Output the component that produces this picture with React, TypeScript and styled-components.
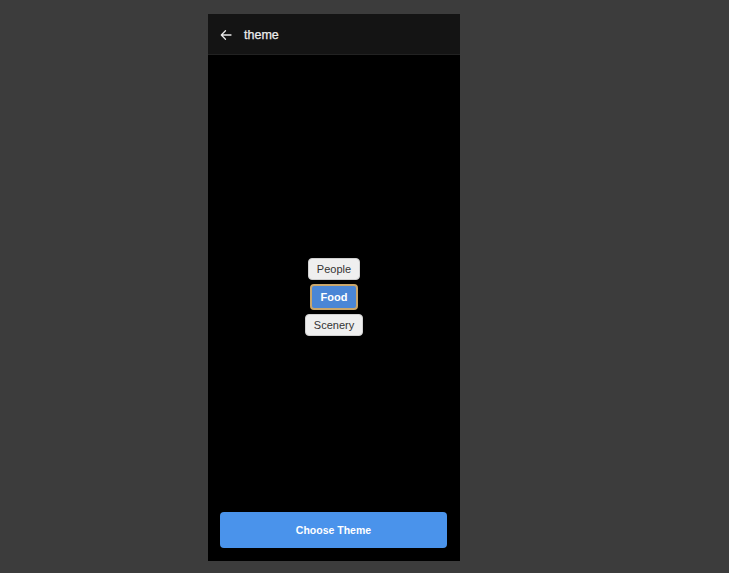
import React, { useState } from 'react';
import styled, { createGlobalStyle } from 'styled-components';

const GlobalStyle = createGlobalStyle`
  html, body {
    margin: 0;
    padding: 0;
    background: #3c3c3c;
    font-family: "Liberation Sans", Arial, sans-serif;
  }
`;

const Page = styled.div`
  display: flex;
  padding: 14px 0 0 208px;
  height: 573px;
  box-sizing: border-box;
`;

const Phone = styled.div`
  width: 252px;
  height: 547px;
  background: #000;
  display: flex;
  flex-direction: column;
`;

const Header = styled.header`
  height: 41px;
  flex-shrink: 0;
  background: #141414;
  border-bottom: 1px solid #222;
  display: flex;
  align-items: center;
  padding: 1px 0 0 11px;
  box-sizing: border-box;
  gap: 11px;
`;

const BackButton = styled.button`
  background: none;
  border: none;
  padding: 0;
  width: 14px;
  height: 14px;
  display: flex;
  align-items: center;
  justify-content: center;
  color: #e8e8e8;
  cursor: pointer;
`;

const Title = styled.h1`
  margin: 0;
  font-size: 12.5px;
  font-weight: 400;
  color: #ededed;
  -webkit-text-stroke: 0.25px #ededed;
`;

const Content = styled.main`
  flex: 1;
  display: flex;
  flex-direction: column;
  align-items: center;
  justify-content: center;
  gap: 4px;
  padding-top: 38px;
`;

const Chip = styled.button<{ $active?: boolean }>`
  height: ${(p) => (p.$active ? '26px' : '22px')};
  padding: 0 ${(p) => (p.$active ? '9px' : '8px')};
  border-radius: 4px;
  font-family: inherit;
  font-size: 11px;
  font-weight: ${(p) => (p.$active ? 700 : 400)};
  color: ${(p) => (p.$active ? '#fff' : '#333')};
  background: ${(p) => (p.$active ? '#4a86d6' : '#efefef')};
  border: ${(p) => (p.$active ? '2px solid #c9a66b' : '1px solid #d0d0d0')};
  cursor: pointer;
`;

const Footer = styled.footer`
  padding: 12px 13px 13px 12px;
`;

const PrimaryButton = styled.button`
  width: 100%;
  height: 36px;
  border: none;
  border-radius: 4px;
  background: #4a93eb;
  color: #fff;
  font-family: inherit;
  font-size: 10.5px;
  font-weight: 700;
  cursor: pointer;
`;

const themes = ['People', 'Food', 'Scenery'];

export default function App() {
  const [selected, setSelected] = useState('Food');

  return (
    <>
      <GlobalStyle />
      <Page>
        <Phone>
          <Header>
            <BackButton aria-label="back">
              <svg width="12" height="12" viewBox="0 0 12 12" fill="none">
                <path
                  d="M11 6H1.5M5.5 1.8L1.3 6l4.2 4.2"
                  stroke="currentColor"
                  strokeWidth="1.3"
                  strokeLinecap="round"
                  strokeLinejoin="round"
                />
              </svg>
            </BackButton>
            <Title>theme</Title>
          </Header>
          <Content>
            {themes.map((t) => (
              <Chip key={t} $active={t === selected} onClick={() => setSelected(t)}>
                {t}
              </Chip>
            ))}
          </Content>
          <Footer>
            <PrimaryButton>Choose Theme</PrimaryButton>
          </Footer>
        </Phone>
      </Page>
    </>
  );
}
